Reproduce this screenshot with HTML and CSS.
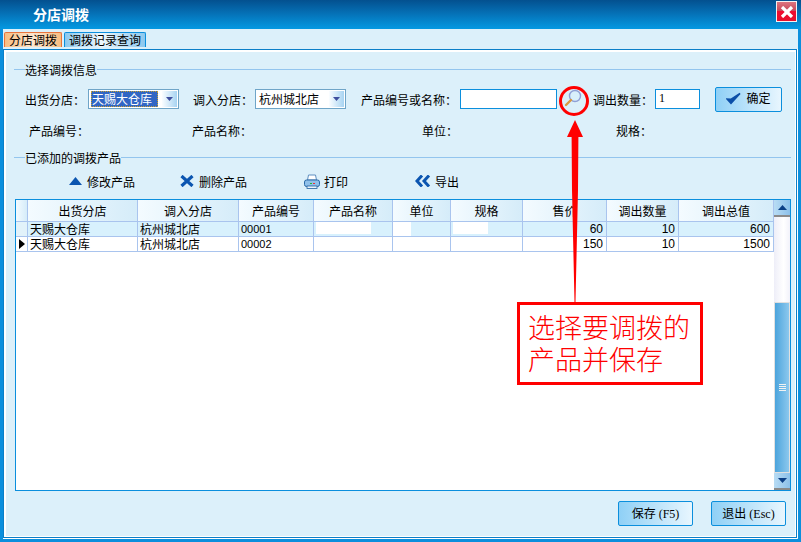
FILE: index.html
```html
<!DOCTYPE html>
<html lang="zh">
<head>
<meta charset="utf-8">
<title>分店调拨</title>
<link rel="stylesheet" href="styles.css">
</head>
<body>
<div class="window">
  <header class="titlebar">
    <span class="title">分店调拨</span>
    <button class="close" aria-label="关闭"><svg width="14" height="12" viewBox="0 0 14 12"><path d="M2 1 L12 11 M12 1 L2 11" stroke="#fff" stroke-width="3.2" fill="none"/></svg></button>
  </header>
  <nav class="tabs">
    <span class="tab active">分店调拨</span>
    <span class="tab">调拨记录查询</span>
  </nav>
  <main class="pane">
    <div class="legend first"><span>选择调拨信息</span></div>
    <div class="formrow">
      <label class="lbl l1">出货分店<b class="colon">：</b></label>
      <div class="combo"><span class="val sel">天赐大仓库</span><i class="drop"><svg width="7" height="4" viewBox="0 0 7 4"><path d="M0 0H7L3.5 4Z" fill="#3f4f9f"/></svg></i></div>
      <label class="lbl l2">调入分店<b class="colon">：</b></label>
      <div class="combo"><span class="val">杭州城北店</span><i class="drop"><svg width="7" height="4" viewBox="0 0 7 4"><path d="M0 0H7L3.5 4Z" fill="#3f4f9f"/></svg></i></div>
      <label class="lbl l3">产品编号或名称<b class="colon">：</b></label>
      <div class="input wide"></div>
      <svg class="lens" width="20" height="20" viewBox="0 0 20 20"><circle cx="12" cy="7" r="5.5" fill="#d8f0fb" stroke="#8f9fd6" stroke-width="1.4"/><path d="M8 11 L3 16" stroke="#d89a40" stroke-width="2.4" stroke-linecap="round"/></svg>
      <label class="lbl l4">调出数量<b class="colon">：</b></label>
      <div class="input qty">1</div>
      <button class="btn ok"><svg width="15" height="13" viewBox="0 0 15 13"><path d="M1 7 L5 11.5 L14 1.5 L5.2 7.2 Z" fill="#0b4fa8" stroke="#0b4fa8" stroke-width="1.5"/></svg>确定</button>
    </div>
    <div class="inforow">
      <span>产品编号<b class="colon">：</b></span>
      <span>产品名称<b class="colon">：</b></span>
      <span>单位<b class="colon">：</b></span>
      <span>规格<b class="colon">：</b></span>
    </div>
    <div class="legend second"><span>已添加的调拨产品</span></div>
    <div class="toolbar">
      <span class="tool t1"><svg width="13" height="8" viewBox="0 0 13 8"><path d="M6.5 0L13 8H0Z" fill="#0b55b0"/></svg>修改产品</span>
      <span class="tool t2"><svg width="14" height="12" viewBox="0 0 14 12"><path d="M1.5 1 L12.5 11 M12.5 1 L1.5 11" stroke="#0b55b0" stroke-width="3.2"/></svg>删除产品</span>
      <span class="tool t3"><svg width="16" height="15" viewBox="0 0 16 15"><path d="M4.5 1H11.5L12.5 6H3.5Z" fill="#fff" stroke="#5f8fc0"/><rect x="0.5" y="6" width="15" height="6.5" rx="2" fill="#8fc0ea" stroke="#2a6aa8"/><rect x="3" y="12" width="10" height="2.5" fill="#eaf4fc" stroke="#1f5f9f" stroke-width=".8"/><rect x="6" y="9" width="2" height="1" fill="#2b3"/><rect x="9" y="9" width="2" height="1" fill="#e33"/></svg>打印</span>
      <span class="tool t4"><svg width="16" height="12" viewBox="0 0 16 12"><path d="M7 0.5 L2 6 L7 11.5 M14 0.5 L9 6 L14 11.5" stroke="#0b55b0" stroke-width="3" fill="none"/></svg>导出</span>
    </div>
    <div class="grid">
      <div class="gridbody">
        <table>
          <colgroup>
            <col class="c0"><col class="c1"><col class="c2"><col class="c3"><col class="c4"><col class="c5"><col class="c6"><col class="c7"><col class="c8"><col class="c9">
          </colgroup>
          <thead>
            <tr><th></th><th>出货分店</th><th>调入分店</th><th>产品编号</th><th>产品名称</th><th>单位</th><th>规格</th><th>售价</th><th>调出数量</th><th>调出总值</th></tr>
          </thead>
          <tbody>
            <tr class="odd"><td class="ind"></td><td>天赐大仓库</td><td>杭州城北店</td><td class="num">00001</td><td class="mask"><i class="m3"></i></td><td class="mask"><i class="m4"></i></td><td class="mask"><i class="m5"></i></td><td class="r">60</td><td class="r">10</td><td class="r">600</td></tr>
            <tr><td class="ind"><i class="arrow"></i></td><td>天赐大仓库</td><td>杭州城北店</td><td class="num">00002</td><td></td><td></td><td></td><td class="r">150</td><td class="r">10</td><td class="r">1500</td></tr>
          </tbody>
        </table>
      </div>
      <div class="scrollbar">
        <span class="sbtn"><svg width="9" height="5" viewBox="0 0 9 5"><path d="M4.5 0L9 5H0Z" fill="#0b3f86"/></svg></span>
        <span class="strack"></span>
        <span class="sthumb"><i class="grip"></i></span>
        <span class="sbtn"><svg width="9" height="5" viewBox="0 0 9 5"><path d="M0 0H9L4.5 5Z" fill="#0b3f86"/></svg></span>
      </div>
    </div>
    <div class="footer">
      <button class="btn act">保存 (F5)</button>
      <button class="btn act">退出 (Esc)</button>
    </div>
  </main>
  <div class="ring"></div>
  <svg class="pointer" width="20" height="182" viewBox="0 0 20 182"><path d="M10 0 L18 17 L13.4 17 L13 70 L10.5 182 L9.5 182 L7 70 L6.6 17 L2 17 Z" fill="#f00"/></svg>
  <div class="callout">选择要调拨的<br>产品并保存</div>
</div>
</body>
</html>
```
FILE: styles.css
```css
* { box-sizing: border-box; }
html, body { margin: 0; padding: 0; }
body { width: 801px; height: 542px; overflow: hidden; font-family: "Noto Sans CJK SC", "Liberation Sans", sans-serif; font-size: 12px; color: #000; }
.window { position: relative; width: 801px; height: 542px; background: #dcf0fa; border: 3px solid #0b8fdd; border-top: 0; display: flex; flex-direction: column; }
.titlebar { height: 29px; margin: 0 -3px; flex: none; background: linear-gradient(#03508f 0, #0570b5 45%, #0499e2 100%); display: flex; align-items: center; justify-content: space-between; padding: 0 4px 0 33px; }
.title { color: #fff; font-weight: 700; font-size: 14px; margin-top: -1px; }
.close { width: 21px; height: 21px; margin: -6px 0 0; padding: 0; border: 1px solid #f2f2f2; background: linear-gradient(#dc7580, #c84a5a 45%, #f00c30 46%, #e8102c); display: flex; align-items: center; justify-content: center; }
.tabs { height: 18px; margin-top: 3px; margin-left: 1px; flex: none; display: flex; gap: 2px; align-items: flex-start; }
.tab { height: 15px; line-height: 14px; padding: 0 4px; border: 1px solid #0b8fdd; border-bottom: 0; border-radius: 2px 2px 0 0; background: linear-gradient(90deg, #8cc8ee, #eef8fd 45%, #8cc8ee); white-space: nowrap; font-size: 12px; }
.tab.active { border-color: #e8743c; background: linear-gradient(90deg, #f8bd80, #fde6cf 50%, #f8bd80); }
.pane { flex: 1; margin: -1px 1px 1px 0; border: 1px solid #0b7fc8; box-shadow: inset 0 0 0 1px #fff, inset 2px 2px 0 #fff, 0 1px 0 #fff, 1px 0 0 #fff; padding: 0 7px 0 9px; display: flex; flex-direction: column; position: relative; background: #dcf0fa; }
.colon { font-family: "Noto Sans CJK TC", sans-serif; font-weight: 400; }
.legend { height: 14px; display: flex; align-items: center; position: relative; padding-left: 11px; margin-right: -2px; margin-left: 1px; }
.legend::before { content: ""; position: absolute; left: 0; right: 0; top: 6px; height: 1px; background: #93c5ee; }
.legend span { position: relative; background: #dcf0fa; line-height: 14px; white-space: nowrap; }
.legend.first { margin-top: 13px; }
.legend.second { margin-top: 13px; }
.formrow { height: 24px; margin-top: 10px; display: flex; align-items: center; white-space: nowrap; }
.l1 { margin-left: 12px; width: 63px; }
.combo { width: 91px; height: 20px; background: #fff; border: 1px solid #6fa5c8; display: flex; align-items: center; padding-left: 2px; justify-content: space-between; }
.val { height: 16px; line-height: 15px; padding-left: 1px; width: 67px; }
.val.sel { background: #3166c4; color: #fff; outline: 1px dotted #c8a030; outline-offset: -1px; }
.drop { width: 15px; height: 16px; margin-right: 1px; display: flex; align-items: center; justify-content: center; background: linear-gradient(90deg, #fafdff, #a8d4f2); }
.l2 { margin-left: 14px; width: 62px; }
.l3 { margin-left: 15px; width: 99px; }
.input { height: 20px; background: #fff; border: 1px solid #0b8fdd; }
.wide { width: 97px; }
.lens { margin: 0 0 0 6px; flex: none; }
.l4 { margin-left: 10px; width: 62px; }
.qty { width: 45px; font-family: "Liberation Serif", serif; padding-left: 3px; line-height: 17px; }
.btn { font-family: "Liberation Serif", "Noto Sans CJK SC", serif; font-size: 12px; border: 1px solid #0b8fdd; border-radius: 2px; background: linear-gradient(90deg, #8fd0f6, #e8f6fe); padding: 0 0 2px; display: inline-flex; align-items: center; justify-content: center; color: #000; }
.ok { width: 67px; height: 25px; margin-left: 15px; gap: 5px; }
.inforow { height: 14px; margin-top: 13px; display: grid; grid-template-columns: 163px 230px 194px 1fr; padding-left: 16px; line-height: 14px; }
.toolbar { height: 20px; margin-top: 6px; display: flex; align-items: center; white-space: nowrap; }
.tool { display: inline-flex; align-items: center; gap: 5px; }
.tool svg { flex: none; }
.t1 { margin-left: 56px; width: 111px; }
.t2 { width: 124px; gap: 5px; }
.t3 { width: 111px; gap: 4px; }
.t4 { gap: 4px; }
.grid { height: 292px; margin-top: 8px; border: 1px solid #0b8fdd; background: #fff; display: flex; margin-right: -2px; margin-left: 2px; }
.gridbody { width: 758px; flex: none; }
table { border-collapse: separate; border-spacing: 0; table-layout: fixed; width: 758px; }
.c0 { width: 12px; } .c1 { width: 110px; } .c2 { width: 101px; } .c3 { width: 75px; } .c4 { width: 79px; }
.c5 { width: 58px; } .c6 { width: 72px; } .c7 { width: 84px; } .c8 { width: 72px; } .c9 { width: 95px; }
th, td { border-right: 1px solid #a9c4ee; border-bottom: 1px solid #a9c4ee; padding: 0; white-space: nowrap; font-weight: 400; }
th { height: 22px; text-align: center; background: linear-gradient(90deg, #f4fbff, #d5ecf9); }
td { height: 15px; line-height: 14px; padding-left: 2px; background: #fff; }
.odd td { background: #d8f1fd; }
td.ind { padding: 0; background: #fff; }
.odd td.ind { background: #e2f2fa; }
.num { font-family: "Liberation Sans", sans-serif; font-size: 11px; }
.r { text-align: right; padding: 0 3px 0 0; font-family: "Liberation Sans", sans-serif; font-size: 12px; }
.mask { padding: 0; vertical-align: top; }
.mask i { display: block; height: 12px; background: #fff; }
.m3 { width: 55px; margin-left: 2px; }
.m4 { width: 18px; height: 14px !important; }
.m5 { width: 35px; margin-left: 2px; }
.arrow { display: block; width: 0; height: 0; margin-left: 3px; border-left: 6px solid #000; border-top: 5px solid transparent; border-bottom: 5px solid transparent; }
.scrollbar { flex: 1; display: flex; flex-direction: column; background: linear-gradient(90deg, #eeeef8, #fff 60%, #f2f2fa); }
.sbtn { height: 17px; flex: none; display: flex; align-items: center; justify-content: center; background: linear-gradient(90deg, #b8dcf4, #8cc0ea); border-bottom: 2px solid #8a8a8a; }
.strack { height: 85px; flex: none; }
.sthumb { flex: 1; border: 1px solid #e0e0e0; background: linear-gradient(90deg, #4ba4dc, #8cc8ee); display: flex; align-items: center; justify-content: center; }
.grip { width: 7px; height: 7px; background: repeating-linear-gradient(#f2f2f2 0 1px, transparent 1px 2px); }
.footer { display: flex; justify-content: flex-end; gap: 18px; margin-top: 10px; padding-right: 3px; }
.act { width: 75px; height: 25px; }
.ring { position: absolute; left: 556px; top: 86px; width: 30px; height: 30px; border: 3px solid #f00; border-radius: 50%; }
.pointer { position: absolute; left: 562px; top: 120px; }
.callout { position: absolute; left: 514px; top: 302px; width: 186px; height: 83px; border: 3px solid #f00; background: #fff; color: #f00; font-size: 27px; line-height: 32px; padding: 6px 0 0 8px; white-space: nowrap; font-weight: 300; }
```
